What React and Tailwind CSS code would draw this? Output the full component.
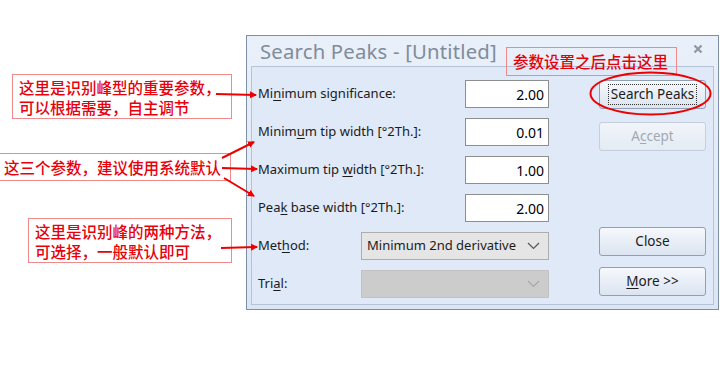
import React from 'react';

const labelFont = { fontFamily: '"Noto Sans", "Liberation Sans", sans-serif' };

const U = ({ children }) => <span className="underline underline-offset-2">{children}</span>;

const NumField = ({ value }) => (
  <div className="ml-auto w-[84px] h-[28px] bg-white border border-[#8e8f8f] flex items-center justify-end pr-[4px] text-[14px] text-black">
    {value}
  </div>
);

const Chevron = ({ color }) => (
  <svg width="13" height="8" viewBox="0 0 13 8" className="ml-auto mr-[2px] shrink-0">
    <path d="M1 1 L6.5 6.5 L12 1" fill="none" stroke={color} strokeWidth="1.2" />
  </svg>
);

const Btn = ({ children, disabled, focused, className = '' }) => (
  <div
    className={`h-[29px] w-[107px] rounded-[3px] border flex items-center justify-center text-[13.5px] ${
      disabled
        ? 'border-[#c3cfdd] bg-gradient-to-b from-[#f1f5fa] to-[#e4ebf4] text-[#a2a8b0]'
        : 'border-[#8f9fb6] bg-gradient-to-b from-[#f6f9fd] to-[#dbe4f0] text-[#1b1b1b]'
    } ${className}`}
  >
    {focused ? (
      <span className="border border-dotted border-[#333] px-[2px] leading-[19px]">{children}</span>
    ) : (
      children
    )}
  </div>
);

const Row = ({ label, children }) => (
  <div className="flex items-center h-[28px] text-[13px] text-[#1b1b1b] whitespace-nowrap">
    <span>{label}</span>
    {children}
  </div>
);

const Note = ({ className, children }) => (
  <div
    className={`absolute border border-[#f08a8a] text-[#e8000b] text-[15.5px] leading-[20px] font-medium whitespace-nowrap ${className}`}
    style={{ fontFamily: '"Noto Sans CJK SC", sans-serif' }}
  >
    {children}
  </div>
);

export default function App() {
  return (
    <div className="relative w-[720px] h-[365px] bg-white overflow-hidden" style={labelFont}>
      {/* dialog window */}
      <div className="ml-[246px] mt-[35px] w-[473px] h-[275px] border border-[#7d8ea6] bg-gradient-to-b from-[#e9f0f9] to-[#dce6f3] flex flex-col px-[4px] pb-[4px]">
        <div className="h-[30px] flex items-center pl-[9px] pr-[9px] shrink-0">
          <span className="text-[20.3px] text-[#7f8c9c] tracking-[0.2px]">Search Peaks - [Untitled]</span>
          <svg width="10" height="10" viewBox="0 0 10 10" className="ml-auto mr-[2px] -mt-[4px]">
            <path d="M1.5 1.5 L8.5 8.5 M8.5 1.5 L1.5 8.5" stroke="#8c98a6" strokeWidth="2.2" />
          </svg>
        </div>
        <div className="flex-1 border border-[#b3c3d8] bg-[#dfe9f7] flex pt-[13px] pl-[6px]">
          <div className="w-[291px] flex flex-col gap-[10px]">
            <Row label={<>Mi<U>n</U>imum significance:</>}>
              <NumField value="2.00" />
            </Row>
            <Row label={<>Minim<U>u</U>m tip width [°2Th.]:</>}>
              <NumField value="0.01" />
            </Row>
            <Row label={<>Maximum tip <U>w</U>idth [°2Th.]:</>}>
              <NumField value="1.00" />
            </Row>
            <Row label={<>Pea<U>k</U> base width [°2Th.]:</>}>
              <NumField value="2.00" />
            </Row>
            <Row label={<>Met<U>h</U>od:</>}>
              <div className="ml-auto w-[188px] h-[28px] border border-[#adadad] bg-[#e5e5e5] flex items-center pl-[5px] pr-[6px]">
                <span>Minimum 2nd derivative</span>
                <Chevron color="#555" />
              </div>
            </Row>
            <Row label={<>Tri<U>a</U>l:</>}>
              <div className="ml-auto w-[188px] h-[28px] border border-[#c2c2c2] bg-[#cccccc] flex items-center pl-[5px] pr-[6px]">
                <Chevron color="#a8a8a8" />
              </div>
            </Row>
          </div>
          <div className="ml-[50px] flex flex-col">
            <Btn focused>Search Peaks</Btn>
            <Btn disabled className="mt-[13px]">A<U>c</U>cept</Btn>
            <Btn className="mt-[76px]">Close</Btn>
            <Btn className="mt-[11px]"><span><U>M</U>ore &gt;&gt;</span></Btn>
          </div>
        </div>
      </div>

      {/* annotations */}
      <Note className="left-[12px] top-[74px] w-[220px] h-[45px] pl-[6px] pt-[2px]">
        这里是识别峰型的重要参数，<br />可以根据需要，自主调节
      </Note>
      <Note className="left-[-1px] top-[153px] w-[232px] h-[28px] pl-[4px] pt-[3px]">
        这三个参数，建议使用系统默认
      </Note>
      <Note className="left-[28px] top-[218px] w-[204px] h-[45px] pl-[6px] pt-[2px]">
        这里是识别峰的两种方法，<br />可选择，一般默认即可
      </Note>
      <Note className="left-[506px] top-[47px] w-[171px] h-[29px] pl-[6px] pt-[3px]">
        参数设置之后点击这里
      </Note>

      <svg className="absolute inset-0 pointer-events-none" width="720" height="365">
        <defs>
          <marker id="ah" markerWidth="8" markerHeight="8" refX="6" refY="4" orient="auto" markerUnits="userSpaceOnUse">
            <path d="M0 0.5 L7 4 L0 7.5 Z" fill="#ee0000" />
          </marker>
        </defs>
        <g stroke="#ee0000" strokeWidth="2" fill="none">
          <line x1="216" y1="94" x2="256" y2="95" markerEnd="url(#ah)" />
          <line x1="222" y1="158" x2="254" y2="142" markerEnd="url(#ah)" />
          <line x1="222" y1="168" x2="257" y2="169" markerEnd="url(#ah)" />
          <line x1="224" y1="178" x2="254" y2="196" markerEnd="url(#ah)" />
          <line x1="221" y1="248" x2="257" y2="247" markerEnd="url(#ah)" />
          <ellipse cx="650.5" cy="93.5" rx="60" ry="21" strokeWidth="2" />
        </g>
      </svg>
    </div>
  );
}
